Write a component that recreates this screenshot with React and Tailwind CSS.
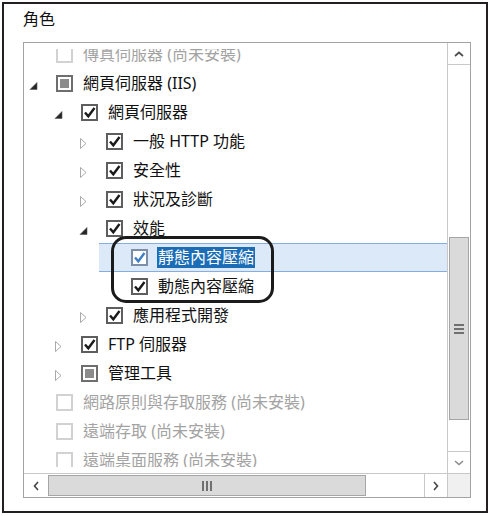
import React from "react";

const rows = [
  { l: 0, t: null, c: "off", s: "傳真伺服器 (尚未安裝)" },
  { l: 0, t: "open", c: "mixed", s: "網頁伺服器 (IIS)" },
  { l: 1, t: "open", c: "on", s: "網頁伺服器" },
  { l: 2, t: "closed", c: "on", s: "一般 HTTP 功能" },
  { l: 2, t: "closed", c: "on", s: "安全性" },
  { l: 2, t: "closed", c: "on", s: "狀況及診斷" },
  { l: 2, t: "open", c: "on", s: "效能" },
  { l: 3, t: null, c: "on", s: "靜態內容壓縮", sel: true },
  { l: 3, t: null, c: "on", s: "動態內容壓縮" },
  { l: 2, t: "closed", c: "on", s: "應用程式開發" },
  { l: 1, t: "closed", c: "on", s: "FTP 伺服器" },
  { l: 1, t: "closed", c: "mixed", s: "管理工具" },
  { l: 0, t: null, c: "off", s: "網路原則與存取服務 (尚未安裝)" },
  { l: 0, t: null, c: "off", s: "遠端存取 (尚未安裝)" },
  { l: 0, t: null, c: "off", s: "遠端桌面服務 (尚未安裝)" },
];

const indent = ["ml-0", "ml-[25px]", "ml-[50px]", "ml-[75px]"];

function Toggle({ t }) {
  return (
    <div className="w-[32px] h-full flex items-center shrink-0">
      {t === "open" && (
        <svg width="9" height="8" viewBox="0 0 9 8" className="ml-[5px] mt-[4px]">
          <path d="M8 0.5 L8 7.5 L1 7.5 Z" fill="#262626" stroke="#555" strokeWidth="0.6" />
        </svg>
      )}
      {t === "closed" && (
        <svg width="7" height="11" viewBox="0 0 7 11" className="ml-[6px] mt-[3px]">
          <path d="M0.5 0.5 L6 5.5 L0.5 10.5 Z" fill="#fff" stroke="#a9a9a9" strokeWidth="1" />
        </svg>
      )}
    </div>
  );
}

function Check({ c, sel }) {
  if (c === "off") {
    return <div className="w-[17px] h-[17px] border-2 border-[#d2d2d2] bg-white shrink-0" />;
  }
  if (c === "mixed") {
    return (
      <div className="w-[17px] h-[17px] border-2 border-[#6e6e6e] bg-white shrink-0 flex items-center justify-center">
        <div className="w-[9px] h-[9px] bg-[#8c8c8c]" />
      </div>
    );
  }
  return (
    <div
      className={
        sel
          ? "w-[17px] h-[17px] border-2 border-[#7d8ea8] bg-white shrink-0"
          : "w-[17px] h-[17px] border-2 border-[#5e5e5e] bg-white shrink-0"
      }
    >
      <svg width="13" height="13" viewBox="0 0 13 13" className="block">
        <path
          d="M2 6.5 L5.3 10.3 L11.5 2"
          fill="none"
          stroke={sel ? "#3f7fc6" : "#1a1a1a"}
          strokeWidth="2.4"
        />
      </svg>
    </div>
  );
}

function Row({ r }) {
  const base = "h-[29px] flex items-center pr-0 " + indent[r.l];
  return (
    <div
      className={
        r.sel
          ? base + " bg-[#dce9f8] border-y border-[#86addf]"
          : base
      }
    >
      <Toggle t={r.t} />
      <Check c={r.c} sel={r.sel} />
      {r.sel ? (
        <span className="ml-[9px] px-[1px] bg-[#1c6db6] text-white leading-[21px] whitespace-nowrap">
          {r.s}
        </span>
      ) : (
        <span
          className={
            r.c === "off"
              ? "ml-[10px] text-[#a3a3a3] leading-[21px] whitespace-nowrap"
              : "ml-[10px] text-[#111] leading-[21px] whitespace-nowrap"
          }
        >
          {r.s}
        </span>
      )}
    </div>
  );
}

export default function App() {
  return (
    <div className="w-[491px] h-[516px] bg-white relative p-[2px] font-['Noto_Sans','Noto_Sans_CJK_TC',sans-serif] text-[16px]">
      <div className="w-[486px] h-[511px] border-2 border-[#231f20] pl-[19px] pt-[4px]">
        <div className="h-[22px] leading-[22px] text-[16px] text-[#111]">角色</div>
        <div className="mt-[12px] w-[448px] h-[456px] border border-[#a3a3a3] flex flex-col">
          <div className="flex-1 flex min-h-0">
            <div className="flex-1 min-w-0 flex flex-col pt-[6px] pb-[6px]">
              <div className="flex-1 overflow-hidden">
                <div className="-mt-[9px]">
                  {rows.map((r, i) => (
                    <Row key={i} r={r} />
                  ))}
                </div>
              </div>
            </div>
            <div className="w-[23px] border-l border-[#c8c8c8] flex flex-col">
              <div className="h-[22px] border-b border-[#c8c8c8] flex items-center justify-center">
                <svg width="10" height="6" viewBox="0 0 10 6">
                  <path d="M1 5 L5 1.5 L9 5" fill="none" stroke="#4d4d4d" strokeWidth="1.7" />
                </svg>
              </div>
              <div className="flex-1 flex flex-col">
                <div className="h-[172px]" />
                <div className="h-[183px] mx-[1px] border border-[#a6a6a6] bg-[#dadada] flex flex-col items-center justify-center gap-[2px]">
                  <div className="w-[10px] h-[2px] bg-[#707070]" />
                  <div className="w-[10px] h-[2px] bg-[#707070]" />
                  <div className="w-[10px] h-[2px] bg-[#707070]" />
                </div>
                <div className="flex-1" />
              </div>
              <div className="h-[22px] border-t border-[#c8c8c8] flex items-center justify-center">
                <svg width="10" height="6" viewBox="0 0 10 6">
                  <path d="M1 1 L5 4.5 L9 1" fill="none" stroke="#8a8a8a" strokeWidth="1.5" />
                </svg>
              </div>
            </div>
          </div>
          <div className="h-[24px] border-t border-[#c8c8c8] flex">
            <div className="w-[24px] flex items-center justify-center">
              <svg width="6" height="10" viewBox="0 0 6 10">
                <path d="M5 1 L1.5 5 L5 9" fill="none" stroke="#444" strokeWidth="1.6" />
              </svg>
            </div>
            <div className="w-[318px] my-[1px] border border-[#a6a6a6] bg-[#dadada] flex items-center justify-center gap-[2px]">
              <div className="w-[2px] h-[10px] bg-[#707070]" />
              <div className="w-[2px] h-[10px] bg-[#707070]" />
              <div className="w-[2px] h-[10px] bg-[#707070]" />
            </div>
            <div className="flex-1" />
            <div className="w-[23px] border-l border-[#c8c8c8] flex items-center justify-center">
              <svg width="6" height="10" viewBox="0 0 6 10">
                <path d="M1 1 L4.5 5 L1 9" fill="none" stroke="#444" strokeWidth="1.6" />
              </svg>
            </div>
            <div className="w-[23px] border-l border-[#c8c8c8] bg-[#f0f0f0]" />
          </div>
        </div>
      </div>
      <div className="absolute left-[111px] top-[236px] w-[163px] h-[67px] border-[3px] border-[#1b1b1b] rounded-[15px] pointer-events-none" />
    </div>
  );
}
